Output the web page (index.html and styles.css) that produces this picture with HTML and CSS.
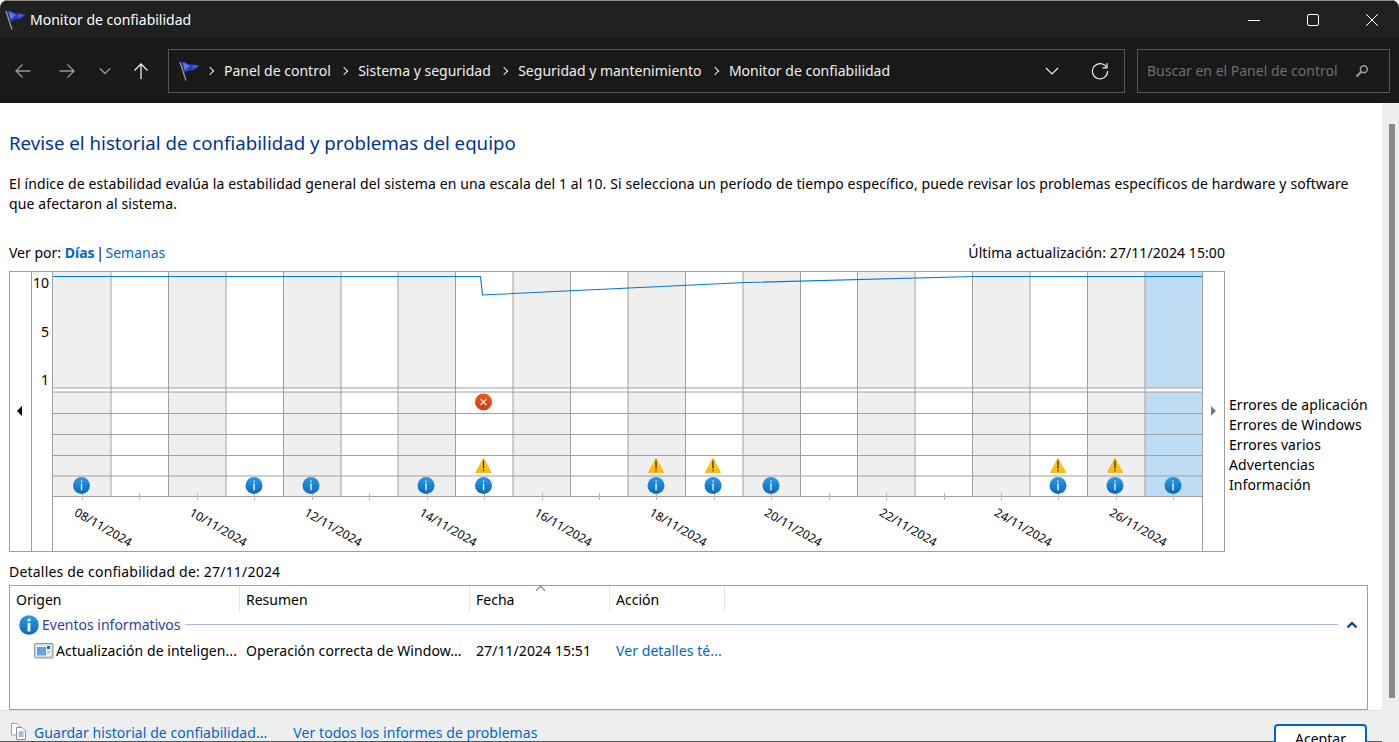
FILE: index.html
```html
<!DOCTYPE html>
<html lang="es">
<head>
    <meta charset="UTF-8">
    <meta name="viewport" content="width=device-width, initial-scale=1.0">
    <title>Monitor de confiabilidad</title>
    <link rel="stylesheet" href="styles.css">
</head>
<body>

<svg class="defs" width="0" height="0" aria-hidden="true">
    <defs>
        <linearGradient id="infoFill" x1="0" y1="0" x2="0" y2="1">
            <stop offset="0" stop-color="#2b9be8"/>
            <stop offset="1" stop-color="#0a68bd"/>
        </linearGradient>
        <linearGradient id="errorFill" x1="0" y1="0" x2="0" y2="1">
            <stop offset="0" stop-color="#ea5a22"/>
            <stop offset="1" stop-color="#cc3f14"/>
        </linearGradient>
        <linearGradient id="warnFill" x1="0" y1="0" x2="0" y2="1">
            <stop offset="0" stop-color="#ffd21e"/>
            <stop offset="1" stop-color="#ffb900"/>
        </linearGradient>
        <symbol id="flag" viewBox="0 0 21 20">
            <path d="M1 1L7 19.5" stroke="#9a9a9a" stroke-width="1.3" fill="none"/>
            <path d="M2.5 0.8C5 0.2 7 2 9.5 3C12 4 15 2.5 20.5 4.5C18.5 6.5 17 8.5 14.5 9C11.5 9.6 8.5 9.2 5.5 12.2Z" fill="#2a3fc0"/>
            <path d="M4 2C6 2 8 4 11 4.6C9.5 6 8.5 7 7 8.4L5.4 8.6Z" fill="#5c78f0"/>
            <path d="M13 4.5C15 4.2 16.5 4.6 18.5 5C17 6.5 15.5 7 13.5 7.2Z" fill="#4a63dc"/>
        </symbol>
        <symbol id="infoIcon" viewBox="0 0 18 18">
            <circle cx="9" cy="9" r="8.5" fill="url(#infoFill)"/>
            <rect x="8.4" y="4" width="1.3" height="1.4" fill="#fff"/>
            <rect x="8.4" y="6.8" width="1.3" height="7" fill="#fff"/>
        </symbol>
        <symbol id="infoBold" viewBox="0 0 20 20">
            <circle cx="10" cy="10" r="9.8" fill="url(#infoFill)"/>
            <circle cx="10" cy="5" r="1.6" fill="#fff"/>
            <rect x="8.6" y="8" width="2.8" height="8.5" fill="#fff"/>
        </symbol>
    </defs>
</svg>

<div class="window">
    <header class="titlebar">
        <svg class="flag-icon"><use href="#flag"/></svg>
        <span class="window-title">Monitor de confiabilidad</span>
        <div class="window-controls">
            <svg width="14" height="14" viewBox="0 0 14 14"><path d="M1 7.5H13" stroke="#fff" fill="none"/></svg>
            <svg width="14" height="14" viewBox="0 0 14 14"><rect x="1.5" y="1.5" width="11" height="11" rx="1.5" stroke="#fff" fill="none"/></svg>
            <svg width="14" height="14" viewBox="0 0 14 14"><path d="M1 1L13 13M13 1L1 13" stroke="#fff" fill="none"/></svg>
        </div>
    </header>

    <nav class="navbar">
        <div class="nav-buttons">
            <svg class="nav-back" width="18" height="16" viewBox="0 0 18 16"><path d="M16.5 8H2M8.5 1.5L2 8L8.5 14.5" stroke="#999" stroke-width="1.3" fill="none"/></svg>
            <svg class="nav-forward" width="18" height="16" viewBox="0 0 18 16"><path d="M1.5 8H16M9.5 1.5L16 8L9.5 14.5" stroke="#999" stroke-width="1.3" fill="none"/></svg>
            <svg class="nav-down" width="12" height="8" viewBox="0 0 12 8"><path d="M1 1.5L6 6.5L11 1.5" stroke="#999" stroke-width="1.3" fill="none"/></svg>
            <svg class="nav-up" width="16" height="18" viewBox="0 0 16 18"><path d="M8 17V2M1.5 8.5L8 2L14.5 8.5" stroke="#eee" stroke-width="1.3" fill="none"/></svg>
        </div>
        <div class="address">
            <svg class="flag-icon"><use href="#flag"/></svg>
            <ol class="crumbs">
                <li>Panel de control</li>
                <li>Sistema y seguridad</li>
                <li>Seguridad y mantenimiento</li>
                <li>Monitor de confiabilidad</li>
            </ol>
            <svg class="address-down" width="14" height="8" viewBox="0 0 14 8"><path d="M1 1L7 7L13 1" stroke="#eee" stroke-width="1.2" fill="none"/></svg>
            <svg class="refresh" width="18" height="18" viewBox="0 0 18 18"><path d="M15.6 5.5A7.6 7.6 0 1 0 16.6 9" stroke="#eee" stroke-width="1.2" fill="none"/><path d="M11.5 5.8H16V1.2" stroke="#eee" stroke-width="1.2" fill="none"/></svg>
        </div>
        <div class="search">
            <span>Buscar en el Panel de control</span>
            <svg width="14" height="14" viewBox="0 0 14 14"><circle cx="8.8" cy="5.2" r="3.4" stroke="#999" stroke-width="1.6" fill="none"/><path d="M6.4 7.8L1.5 12.5" stroke="#999" stroke-width="2.2"/></svg>
        </div>
    </nav>

    <div class="body">
        <div class="page">
            <main class="content">
                <h1>Revise el historial de confiabilidad y problemas del equipo</h1>
                <p class="intro">El índice de estabilidad evalúa la estabilidad general del sistema en una escala del 1 al 10. Si selecciona un período de tiempo específico, puede revisar los problemas específicos de hardware y software que afectaron al sistema.</p>

                <div class="view-bar">
                    <span>Ver por: <a class="current">Días</a><span class="sep">|</span><a>Semanas</a></span>
                    <span class="last-update">Última actualización: 27/11/2024 15:00</span>
                </div>

                <div class="chart-row">
                    <div class="chart">
                        <div class="chart-nav"><i class="arrow-left"></i></div>
                        <div class="axis">
                            <span>10</span>
                            <span>5</span>
                            <span>1</span>
                        </div>
                        <svg id="plot" width="1149" height="279" viewBox="0 0 1149 279"></svg>
                        <div class="chart-nav chart-nav-right"><i class="arrow-right"></i></div>
                    </div>
                    <ul class="legend">
                        <li>Errores de aplicación</li>
                        <li>Errores de Windows</li>
                        <li>Errores varios</li>
                        <li>Advertencias</li>
                        <li>Información</li>
                    </ul>
                </div>

                <div class="details-label">Detalles de confiabilidad de: 27/11/2024</div>

                <div class="details">
                    <div class="details-head">
                        <div class="col-origin">Origen</div>
                        <div class="col-summary">Resumen</div>
                        <div class="col-date">Fecha<i class="sort-caret"></i></div>
                        <div class="col-action">Acción</div>
                    </div>
                    <div class="group">
                        <svg class="group-icon"><use href="#infoBold"/></svg>
                        <span class="group-name">Eventos informativos</span>
                        <span class="group-line"></span>
                        <svg class="group-toggle" width="12" height="8" viewBox="0 0 12 8"><path d="M1.5 6.5L6 2L10.5 6.5" stroke="#003399" stroke-width="2" fill="none"/></svg>
                    </div>
                    <div class="details-row">
                        <div class="col-origin">
                            <svg class="row-icon" width="20" height="18" viewBox="0 0 20 18">
                                <rect x="0.5" y="1.5" width="18.5" height="14.5" rx="1" fill="#d5d9de" stroke="#8f959c"/>
                                <rect x="2.5" y="3.5" width="14.5" height="10.5" fill="#f4f7fb"/>
                                <rect x="3" y="5" width="9" height="8.5" fill="#5fa5e6"/>
                                <rect x="13" y="4" width="3" height="3" fill="#2563b0"/>
                                <path d="M13 9H16M13 11H16" stroke="#9fb4cc"/>
                            </svg>
                            <span>Actualización de inteligen...</span>
                        </div>
                        <div class="col-summary">Operación correcta de Window...</div>
                        <div class="col-date">27/11/2024 15:51</div>
                        <div class="col-action"><a>Ver detalles té...</a></div>
                    </div>
                </div>
            </main>

            <footer class="footer">
                <svg class="file-icon" width="17" height="18" viewBox="0 0 17 18">
                    <path d="M1.5 1.5H7L9.5 4V13H1.5Z" fill="#fff" stroke="#a0a0a0"/>
                    <path d="M6.5 5.5H12L15.5 9V17.5H6.5Z" fill="#fff" stroke="#8a8a8a"/>
                    <path d="M8.5 10H13.5M8.5 12H13.5M8.5 14H13.5" stroke="#3f78c8"/>
                </svg>
                <a class="footer-save">Guardar historial de confiabilidad...</a>
                <a class="footer-all">Ver todos los informes de problemas</a>
                <button class="accept">Aceptar</button>
            </footer>
        </div>

        <div class="scrollbar"><div class="scroll-thumb"></div></div>
    </div>
</div>

<script src="chart.js"></script>
</body>
</html>
```

FILE: styles.css
```css
* {
    box-sizing: border-box;
}
html, body {
    margin: 0;
    height: 742px;
    overflow: hidden;
}
body {
    font-family: 'Noto Sans', sans-serif;
    font-size: 14px;
    color: #000;
    background-color: #fff;
}
a {
    color: #0066cc;
}
ul, ol {
    list-style: none;
    margin: 0;
    padding: 0;
}
.defs {
    position: absolute;
}

.window {
    display: flex;
    flex-direction: column;
    height: 742px;
    overflow: hidden;
    border-radius: 8px 8px 0 0;
}

/* title bar */
.titlebar {
    display: flex;
    align-items: center;
    height: 38px;
    flex: none;
    padding-left: 5px;
    background-color: #202020;
    border-top: 1px solid #8a8a8a;
    color: #fff;
}
.flag-icon {
    width: 21px;
    height: 20px;
    flex: none;
}
.window-title {
    margin-left: 4px;
}
.window-controls {
    display: flex;
    gap: 45px;
    margin-left: auto;
    padding-right: 20px;
}

/* nav bar */
.navbar {
    display: flex;
    align-items: center;
    height: 65px;
    flex: none;
    padding: 0 9px 0 14px;
    background-color: #191919;
    color: #eee;
}
.nav-buttons {
    display: flex;
    align-items: center;
    width: 154px;
    flex: none;
}
.nav-forward {
    margin-left: 26px;
}
.nav-down {
    margin-left: 23px;
}
.nav-up {
    margin-left: 22px;
}
.address {
    display: flex;
    align-items: center;
    width: 957px;
    height: 44px;
    flex: none;
    padding: 0 15px 0 10px;
    border: 1px solid #555;
}
.crumbs {
    display: flex;
    flex: 1;
    margin-left: 6px;
}
.crumbs li {
    display: flex;
    align-items: center;
}
.crumbs li::before {
    content: "";
    width: 5px;
    height: 5px;
    margin: 0 11px 0 1px;
    border-top: 1.3px solid #eee;
    border-right: 1.3px solid #eee;
    transform: rotate(45deg);
}
.crumbs li + li {
    margin-left: 9.4px;
}
.address-down {
    margin-right: 32px;
}
.search {
    display: flex;
    align-items: center;
    justify-content: space-between;
    width: 253px;
    height: 44px;
    margin-left: 12px;
    padding: 0 20px 0 9px;
    border: 1px solid #555;
    color: #6e6e6e;
}

/* page */
.body {
    display: flex;
    flex: 1;
    min-height: 0;
}
.page {
    display: flex;
    flex-direction: column;
    flex: 1;
    min-width: 0;
}
.content {
    flex: 1;
    padding-left: 9px;
    padding-right: 14px;
}
h1 {
    margin: 28px 0 0;
    font-size: 18.67px;
    font-weight: 400;
    line-height: 24px;
    color: #003399;
}
.intro {
    max-width: 1345px;
    margin: 19px 0 0;
    line-height: 20px;
    letter-spacing: 0.12px;
}
.view-bar {
    display: flex;
    justify-content: space-between;
    width: 1216px;
    margin-top: 29px;
    line-height: 20px;
}
.view-bar .current {
    font-weight: 700;
}
.sep {
    margin: 0 1.6px;
}
.last-update {
    letter-spacing: 0.08px;
}

/* chart */
.chart-row {
    display: flex;
    margin-top: 8px;
}
.chart {
    display: flex;
    width: 1216px;
    height: 281px;
    border: 1px solid #a0a0a0;
}
.chart-nav {
    width: 22px;
    flex: none;
    padding: 134px 0 0 7px;
    border-right: 1px solid #a0a0a0;
}
.chart-nav-right {
    width: auto;
    flex: 1;
    padding-left: 8px;
    border-right: 0;
    border-left: 1px solid #a0a0a0;
}
.arrow-left, .arrow-right {
    display: block;
    width: 0;
    height: 0;
    border-top: 5px solid transparent;
    border-bottom: 5px solid transparent;
}
.arrow-left {
    border-right: 5px solid #000;
}
.arrow-right {
    border-left: 5px solid #777;
}
.axis {
    display: flex;
    flex-direction: column;
    gap: 28.5px;
    width: 21px;
    flex: none;
    padding: 1px 3px 0 0;
    border-right: 1px solid #a0a0a0;
    font-size: 14px;
    line-height: 20px;
    text-align: right;
}
#plot {
    flex: none;
}
.band-gray {
    fill: #efefef;
}
.band-blue {
    fill: #bfdcf5;
}
.grid-line {
    stroke: #a0a0a0;
    fill: none;
}
.tick {
    stroke: #bbb;
}
.stability {
    stroke: #0078d7;
    stroke-width: 1.1;
    fill: none;
}
.date-label {
    font-size: 12px;
    fill: #000;
}
.legend {
    padding: 124px 0 0 4px;
    line-height: 20px;
    letter-spacing: 0.08px;
}

/* details list */
.details-label {
    margin-top: 10px;
    line-height: 20px;
    letter-spacing: 0.2px;
}
.details {
    width: 1359px;
    height: 125px;
    margin-top: 3px;
    border: 1px solid #a0a0a0;
}
.details-head, .details-row {
    display: flex;
}
.details-head > div {
    position: relative;
    height: 26px;
    line-height: 28px;
    padding-left: 6px;
    border-right: 1px solid #e5e5e5;
}
.col-origin {
    width: 230px;
}
.col-summary {
    width: 230px;
}
.col-date {
    width: 140px;
}
.col-action {
    width: 115px;
}
.sort-caret {
    position: absolute;
    top: 1px;
    left: 67px;
    width: 7px;
    height: 7px;
    border-top: 1px solid #777;
    border-left: 1px solid #777;
    transform: rotate(45deg);
}
.group {
    display: flex;
    align-items: center;
    height: 25px;
    padding-left: 9px;
}
.group-icon {
    width: 20px;
    height: 20px;
    flex: none;
}
.group-name {
    margin-left: 3px;
    color: #2a3f9e;
}
.group-line {
    flex: 1;
    height: 1px;
    margin-left: 4px;
    background-color: #a8bce0;
}
.group-toggle {
    margin: 0 9px 0 8px;
}
.details-row {
    height: 26px;
    margin-top: 1px;
    line-height: 26px;
    letter-spacing: 0.07px;
}
.details-row > div {
    padding-left: 6px;
    white-space: nowrap;
}
.details-row .col-origin {
    display: flex;
    align-items: center;
    padding-left: 24px;
}
.row-icon {
    flex: none;
    margin-right: 2px;
}

/* footer */
.footer {
    display: flex;
    height: 32px;
    flex: none;
    padding: 12px 15px 0 10px;
    background-color: #eee;
    border-top: 1px solid #ddd;
    border-bottom: 1px solid #555;
    line-height: 20px;
    letter-spacing: 0.06px;
}
.file-icon {
    flex: none;
    margin-top: -1px;
}
.footer-save {
    margin-left: 7px;
}
.footer-all {
    margin-left: 26px;
}
.accept {
    width: 93px;
    height: 30px;
    margin: 1px 0 0 auto;
    padding: 0;
    background-color: #fff;
    border: 2px solid #0067c0;
    border-radius: 4px;
    font: inherit;
}

/* scrollbar */
.scrollbar {
    width: 17px;
    flex: none;
    padding: 21px 4px 0 7px;
    background-color: #eee;
}
.scroll-thumb {
    height: 574px;
    background-color: #8a8a8a;
}
```

FILE: chart.js
```js
// coordinates are page pixels, the plot svg starts at (53, 272)
const NS = 'http://www.w3.org/2000/svg';
const plot = document.getElementById('plot');
const ox = 53, oy = 272;

const infoDays = [81.5, 254, 311, 426, 483.5, 656, 713, 771, 1058, 1115, 1173];
const warnDays = [483.5, 656, 713, 1058, 1115];
const laneLines = [388, 392, 413.5, 434.5, 455.5, 476, 496.5];
const dates = ['08', '10', '12', '14', '16', '18', '20', '22', '24', '26'];
const stability = '52,276.5 480.5,276.5 482.5,295 740,282.7 973,276.5 1202,276.5';

function add(tag, attrs, parent, text) {
    const el = document.createElementNS(NS, tag);
    for (let key in attrs) {
        el.setAttribute(key, attrs[key]);
    }
    if (text) el.textContent = text;
    (parent || plot).appendChild(el);
    return el;
}

function columnX(i) {
    return Math.round((53.56 + 57.44 * i) * 2) / 2 - ox;
}

function drawBands() {
    for (let i = 0; i < 20; i++) {
        if (i % 2 && i !== 19) continue;
        const x = i === 0 ? 0 : columnX(i);
        const w = columnX(i + 1) - x;
        const cls = i === 19 ? 'band-blue' : 'band-gray';
        add('rect', { class: cls, x: x, y: 0, width: w, height: 116 });
        add('rect', { class: cls, x: x, y: 120, width: w, height: 104 });
    }
}

function drawGrid() {
    for (let i = 1; i <= 20; i++) {
        add('path', { class: 'grid-line', d: `M${columnX(i)} 0V224.5` });
    }
    laneLines.forEach(y => {
        add('path', { class: 'grid-line', d: `M0 ${y - oy}H1149` });
    });
    for (let k = 0; k < 20; k++) {
        const x = Math.round(82 + 57.44 * k) - ox + 0.5;
        add('path', { class: 'tick', d: `M${x} ${493 - oy}V${500 - oy}` });
    }
}

function drawLine() {
    const points = stability.split(' ').map(p => {
        const [x, y] = p.split(',');
        return `${x - ox},${y - oy}`;
    });
    add('polyline', { class: 'stability', points: points.join(' ') });
}

function drawIcons() {
    infoDays.forEach(x => {
        add('use', { href: '#infoIcon', x: x - ox - 9, y: 485.5 - oy - 9, width: 18, height: 18 });
    });
    warnDays.forEach(x => {
        const g = add('g', { transform: `translate(${x - ox} ${465.5 - oy})` });
        add('path', { d: 'M0 -7.5L7.6 7H-7.6Z', fill: 'url(#warnFill)', stroke: '#eaa800', 'stroke-width': 0.6, 'stroke-linejoin': 'round' }, g);
        add('path', { d: 'M0 -5V3', stroke: '#222', 'stroke-width': 1.2 }, g);
        add('path', { d: 'M0 4.2V5.8', stroke: '#222', 'stroke-width': 1.2 }, g);
    });
    const err = add('g', { transform: `translate(${483.5 - ox} ${402 - oy})` });
    add('circle', { r: 8.5, fill: 'url(#errorFill)' }, err);
    add('path', { d: 'M-3 -3L3 3M3 -3L-3 3', stroke: '#fbe3d8', 'stroke-width': 1.4 }, err);
}

function drawDates() {
    dates.forEach((d, i) => {
        const x = 73.5 + 115 * i - ox;
        add('text', { class: 'date-label', transform: `translate(${x} ${515 - oy}) rotate(30)` }, plot, `${d}/11/2024`);
    });
}

document.addEventListener('DOMContentLoaded', () => {
    drawBands();
    drawGrid();
    drawLine();
    drawIcons();
    drawDates();
});
```
